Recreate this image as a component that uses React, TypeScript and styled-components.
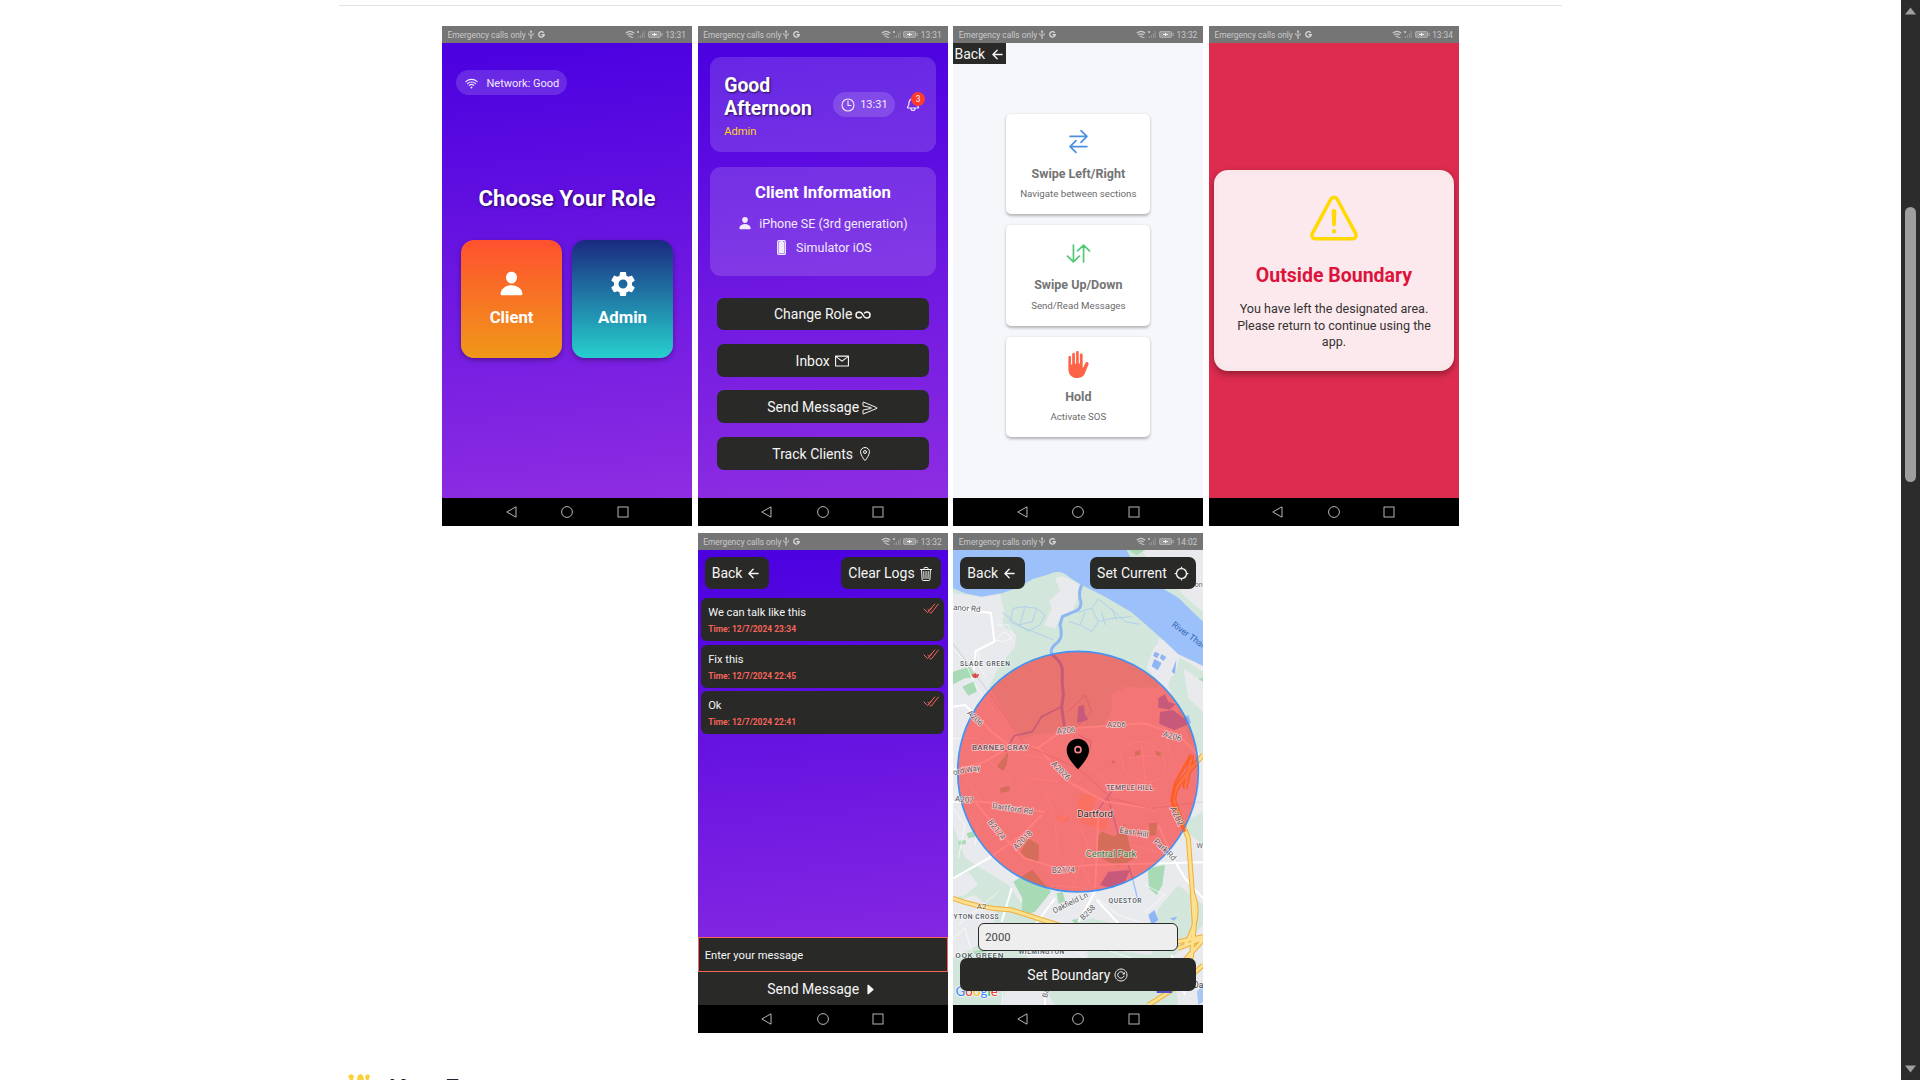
import React from 'react';
import styled, { createGlobalStyle } from 'styled-components';
import {
  IoPerson, IoWifi, IoTimeOutline, IoNotificationsOutline, IoPhonePortrait, IoInfinite,
  IoSendOutline, IoLocationOutline, IoArrowBack, IoSwapHorizontal, IoSwapVertical, IoHandLeft,
  IoTrashOutline, IoCaretForward, IoReloadCircleOutline, IoWarningOutline,
} from 'react-icons/io5';
import { MdSettings, MdGpsNotFixed } from 'react-icons/md';
import { AiOutlineMail } from 'react-icons/ai';

const Global = createGlobalStyle`
  html, body { margin: 0; background: #fff; overflow: hidden; }
  * { box-sizing: border-box; }
  svg { display: block; flex: none; }
`;

const Viewport = styled.div`
  display: flex;
  width: 1920px;
  height: 1080px;
  overflow: hidden;
  font-family: Roboto, "Noto Sans", sans-serif;
`;
const Page = styled.main`
  flex: 1;
  height: 1080px;
  overflow: hidden;
  padding: 5px 339px 0;
`;
const Gallery = styled.section`
  display: flex;
  flex-wrap: wrap;
  justify-content: center;
  gap: 7px 5.67px;
  border-top: 1px solid #dfe2e6;
  padding-top: 20px;
`;
const Heading = styled.h2`
  display: flex;
  gap: 17px;
  margin: 38px 0 0 8px;
  font: 600 28px/36px "Open Sans", "Noto Sans", sans-serif;
  color: #1f2328;
  svg { margin-top: 3px; }
`;

const Scrollbar = styled.div`
  width: 19px;
  height: 1080px;
  background: #2c2c2c;
  display: flex;
  flex-direction: column;
  align-items: center;
  justify-content: space-between;
  padding: 7px 0;
`;
const Track = styled.div`
  flex: 1;
  padding-top: 192px;
`;
const Thumb = styled.div`
  width: 11px;
  height: 275px;
  border-radius: 6px;
  background: #9f9f9f;
`;

const PhoneFrame = styled.article`
  width: 250px;
  height: 500px;
  display: flex;
  flex-direction: column;
  overflow: hidden;
`;
const Status = styled.header`
  height: 17px;
  flex: none;
  background: #757575;
  color: #c9c9c9;
  display: flex;
  align-items: center;
  padding: 0 6px 0 5.5px;
  font-size: 8.4px;
  white-space: nowrap;
`;
const StatusRight = styled.span`
  margin-left: auto;
  display: flex;
  align-items: center;
  gap: 2.5px;
`;
const Screen = styled.div<{ $bg: string }>`
  flex: 1;
  min-height: 0;
  background: ${p => p.$bg};
  display: flex;
  flex-direction: column;
  position: relative;
`;
const NavBar = styled.footer`
  height: 28.5px;
  flex: none;
  background: #000;
  display: flex;
  justify-content: center;
  align-items: center;
  gap: 43.5px;
`;

const purple = 'linear-gradient(175deg, #4a00e0 0%, #8e2de2 100%)';

const Pill = styled.div<{ $gap: number }>`
  display: flex;
  align-items: center;
  gap: ${p => p.$gap}px;
  height: 25px;
  padding: 1px 7.5px 0;
  border-radius: 13px;
  background: rgba(255, 255, 255, 0.15);
  color: #f1eafc;
  font-size: 11px;
  white-space: nowrap;
`;
const ClockPill = styled(Pill)`
  svg path { stroke-width: 36px; }
`;
const RoleTop = styled.div`
  display: flex;
  padding: 27px 14px 0;
`;
const RoleTitle = styled.h1`
  margin: 90px 0 0;
  text-align: center;
  font: 700 22.2px/26px Roboto, sans-serif;
  color: #fff;
  text-shadow: 1px 1px 3px rgba(0, 0, 0, 0.6);
`;
const RoleRow = styled.div`
  display: flex;
  justify-content: center;
  gap: 10.5px;
  margin-top: 29px;
`;
const RoleCard = styled.div<{ $bg: string }>`
  width: 100.5px;
  height: 118px;
  border-radius: 13px;
  background: ${p => p.$bg};
  box-shadow: 0 2px 5px rgba(0, 0, 0, 0.35);
  display: flex;
  flex-direction: column;
  align-items: center;
  padding-top: 29.5px;
  color: #fff;
  font: 700 16.7px/20px Roboto, sans-serif;
`;
const RoleIcon = styled.div`
  height: 28px;
  margin-bottom: 10px;
  display: flex;
  align-items: center;
`;

const Glass = styled.div`
  margin: 0 12px 15px 12.5px;
  border-radius: 11px;
  background: rgba(255, 255, 255, 0.15);
  color: #f1eafc;
`;
const Greeting = styled(Glass)`
  margin-top: 13.5px;
  height: 95.5px;
  display: flex;
  align-items: center;
  padding: 0 17px 0 14px;
`;
const Hello = styled.h2`
  margin: 4.5px 0 0;
  width: 108.5px;
  font: 700 19.4px/22.8px Roboto, sans-serif;
  color: #fff;
  text-shadow: 1px 1px 2px rgba(0, 0, 0, 0.65);
`;
const RoleName = styled.div`
  margin-top: 4.5px;
  font-size: 11.2px;
  line-height: 13px;
  color: #ffd21c;
`;
const Bell = styled.div`
  position: relative;
  margin-left: 10px;
  path { stroke-width: 38px; }
`;
const Badge = styled.span`
  position: absolute;
  right: -4px;
  top: -4.5px;
  width: 14px;
  height: 14px;
  border-radius: 7px;
  background: #ff3b30;
  color: #fff;
  font-size: 8.3px;
  line-height: 15px;
  text-align: center;
`;
const InfoCard = styled(Glass)`
  height: 108.5px;
  padding-top: 16px;
  display: flex;
  flex-direction: column;
  align-items: center;
`;
const InfoTitle = styled.h3`
  margin: 0 0 10px;
  font: 700 16.7px/20px Roboto, sans-serif;
  color: #fff;
`;
const InfoLine = styled.div<{ $gap: number }>`
  display: flex;
  align-items: center;
  gap: ${p => p.$gap}px;
  height: 20px;
  margin-bottom: 4px;
  font-size: 12.5px;
  white-space: nowrap;
`;
const Menu = styled.div`
  display: flex;
  flex-direction: column;
  gap: 13.8px;
  margin: 7px 19px 0;
`;
const DarkButton = styled.button<{ $gap?: number; $right?: number }>`
  display: flex;
  justify-content: center;
  align-items: center;
  gap: ${p => p.$gap ?? 4}px;
  height: 32.7px;
  padding: 2px ${p => p.$right ?? 7}px 0 7px;
  border: 0;
  border-radius: 7px;
  background: #292927;
  color: #f5f5f5;
  font: 400 14px/17px Roboto, sans-serif;
  white-space: nowrap;
`;
const CornerBack = styled(DarkButton)`
  align-self: flex-start;
  width: 53px;
  height: 21px;
  padding: 1.5px 2px 0;
  gap: 5px;
  border-radius: 0;
`;

const Hints = styled.div`
  display: flex;
  flex-direction: column;
  align-items: center;
  gap: 11px;
  margin-top: 49.5px;
`;
const Hint = styled.div`
  width: 144px;
  height: 100.6px;
  border-radius: 5px;
  background: #fff;
  box-shadow: 0 1.5px 3px rgba(0, 0, 0, 0.28);
  display: flex;
  flex-direction: column;
  align-items: center;
  padding-top: 14.5px;
  color: #6b6b6b;
  font-size: 9.7px;
  line-height: 12px;
  strong {
    margin: 10.5px 0 6.5px;
    font-size: 12.5px;
    line-height: 16px;
    color: #747474;
  }
`;

const Alert = styled.div`
  width: 240px;
  height: 201.5px;
  margin: 126.5px 0 0 5px;
  border-radius: 14px;
  background: #fce9ed;
  border: 4px solid #fae7ea;
  box-shadow: 0 3px 7px rgba(0, 0, 0, 0.35);
  display: flex;
  flex-direction: column;
  align-items: center;
  padding-top: 16.5px;
`;
const AlertTitle = styled.h2`
  margin: 17.5px 0 13.5px;
  font: 700 19.5px/24px Roboto, sans-serif;
  color: #dc143c;
`;
const AlertText = styled.p`
  margin: 0;
  width: 204px;
  text-align: center;
  font-size: 12.55px;
  line-height: 16.7px;
  color: #333;
`;

const TopActions = styled.div`
  display: flex;
  justify-content: space-between;
  padding: 6.5px 7px 0;
  position: relative;
`;
const Log = styled.div`
  height: 43.3px;
  margin: 0 3.5px 3.2px;
  border-radius: 6px;
  background: #292927;
  display: flex;
  justify-content: space-between;
  padding: 8px 5px 0 7px;
  color: #f5f5f5;
  font-size: 11.15px;
  line-height: 14px;
  svg { margin-top: -3.5px; }
`;
const LogTime = styled.div`
  margin-top: 4px;
  font-size: 8.45px;
  line-height: 10px;
  font-weight: 700;
  color: #f7645b;
`;
const Logs = styled.div`
  margin-top: 9px;
  flex: 1;
`;
const MessageInput = styled.div`
  height: 35px;
  border: 1px solid #f7645b;
  background: #292927;
  color: #f5f5f5;
  font-size: 11.2px;
  line-height: 35px;
  padding-left: 6px;
`;
const SendBar = styled(DarkButton)`
  border-radius: 0;
`;

const MapCanvas = styled.svg`
  position: absolute;
  inset: 0;
  width: 250px;
  height: 455px;
`;
const MapBottom = styled.div`
  margin-top: auto;
  position: relative;
  display: flex;
  flex-direction: column;
  gap: 7px;
  padding: 0 7px 14px;
`;
const Radius = styled.div`
  margin: 0 18px;
  height: 27.5px;
  border: 1.5px solid #292927;
  border-radius: 6px;
  background: #eee;
  color: #444;
  font-size: 11.2px;
  line-height: 27px;
  padding-left: 6px;
`;

const StatusBar = ({ time }: { time: string }) => (
  <Status>
    <span>Emergency calls only</span>
    <svg width="6" height="9" viewBox="0 0 12 18" fill="none" stroke="#c9c9c9" strokeWidth="1.8" style={{ marginLeft: 2 }}>
      <path d="M6 2v13M1.500 6v3.500L6 12l4.500-2.500V6M4.300 4L6 1l1.700 3z" /><circle cx="6" cy="16" r="1" />
    </svg>
    <svg width="7" height="7" viewBox="0 0 14 14" fill="none" stroke="#dadada" strokeWidth="2.6" style={{ marginLeft: 4 }}>
      <path d="M11.500 3.500A5.500 5.500 0 1 0 12.500 7.500H7" />
    </svg>
    <StatusRight>
      <svg width="20" height="9" viewBox="0 0 20 9" fill="none" stroke="#c9c9c9" strokeWidth="1.200">
        <path d="M.8 3.200Q5 -.6 9.200 3.200M2.300 5Q5 2.600 7.700 5M3.600 6.600Q5 5.400 6.400 6.600" /><path d="M5.500 7.500h3M12 1l2 2M14 1l-2 2" strokeWidth=".8" />
        <path d="M13.500 8V6M15.500 8V5M17.500 8V3M19.200 8V1" stroke="#9a9a9a" strokeWidth=".9" />
      </svg>
      <svg width="15" height="7" viewBox="0 0 15 7"><rect x=".5" y=".5" width="12" height="6" rx="1" fill="#999" stroke="#b5b5b5" strokeWidth=".8" /><path d="M4 3.500h5M6.500 2v3" stroke="#eee" strokeWidth="1.200" /><path d="M14 2v3" stroke="#bbb" /></svg>
      <span>{time}</span>
    </StatusRight>
  </Status>
);

const Phone = ({ time, bg, children }: { time: string; bg: string; children: React.ReactNode }) => (
  <PhoneFrame>
    <StatusBar time={time} />
    <Screen $bg={bg}>{children}</Screen>
    <NavBar>
      <svg width="12" height="12" viewBox="0 0 12 12" fill="none" stroke="#b5b5b5"><path d="M10 .8v10.400L.8 6z" /></svg>
      <svg width="12" height="12" viewBox="0 0 12 12" fill="none" stroke="#b5b5b5"><circle cx="6" cy="6" r="5.400" /></svg>
      <svg width="12" height="12" viewBox="0 0 12 12" fill="none" stroke="#b5b5b5"><rect x="1" y="1" width="10" height="10" /></svg>
    </NavBar>
  </PhoneFrame>
);

const DoneMark = () => (
  <svg width="16" height="11" viewBox="0 0 48 33" fill="none" stroke="#f7645b" strokeWidth="3">
    <path d="M2 17L14 29L36 2M14 18L19 23M20 27L24 31L47 2M19 23L26 14" />
  </svg>
);

const logs = [
  ['We can talk like this', '12/7/2024 23:34'],
  ['Fix this', '12/7/2024 22:45'],
  ['Ok', '12/7/2024 22:41'],
];

type Label = {
  t: string; x: number; y: number; s?: number; r?: number; c?: string; w?: number; ls?: number; plain?: boolean;
};
const area = '#505860';
const labels: Label[] = [
  { t: 'Manor Rd', x: 55, y: 257, r: 5 },
  { t: 'SLADE GREEN', x: 121, y: 424, s: 20, c: area, w: 500, ls: 2.2 },
  { t: 'River Than', x: 733, y: 340, s: 26, r: 36, c: '#2f66b5', plain: true },
  { t: 'A206', x: 90, y: 587, r: 44 },
  { t: 'A206', x: 363, y: 624, r: -6 },
  { t: 'A206', x: 514, y: 605 },
  { t: 'A206', x: 682, y: 641, r: 16 },
  { t: 'A2026', x: 348, y: 745, r: 46 },
  { t: 'BARNES CRAY', x: 166, y: 674, c: '#5f5560', w: 500, ls: 1.2 },
  { t: 'ord Way', x: 65, y: 743, s: 23, r: -10 },
  { t: 'TEMPLE HILL', x: 554, y: 796, s: 21, c: '#6d5a64', w: 500, ls: 1.3 },
  { t: 'A207', x: 58, y: 832, r: 6 },
  { t: 'Dartford Rd', x: 203, y: 859, r: 9 },
  { t: 'Dartford', x: 450, y: 875, s: 29, c: '#2b2427' },
  { t: 'A282', x: 696, y: 882, s: 26, r: 64 },
  { t: 'B2174', x: 155, y: 922, r: 52 },
  { t: 'A2018', x: 233, y: 953, r: -44 },
  { t: 'East Hill', x: 567, y: 930, r: 10 },
  { t: 'Park Rd', x: 660, y: 982, r: 44 },
  { t: 'Central Park', x: 498, y: 996, s: 28, c: '#2f7d4a' },
  { t: 'B2174', x: 355, y: 1043, r: -2 },
  { t: 'Oakfield Ln', x: 376, y: 1141, s: 23, r: -26 },
  { t: 'B258', x: 428, y: 1170, s: 23, r: -46 },
  { t: 'QUESTOR', x: 541, y: 1134, s: 20, c: area, w: 500, ls: 1.8 },
  { t: 'A2', x: 110, y: 1153, c: '#6b5a30' },
  { t: 'YTON CROSS', x: 94, y: 1183, s: 20, c: area, w: 500, ls: 1.6 },
  { t: 'WILMINGTON', x: 290, y: 1286, s: 20, c: area, w: 500, ls: 1.4 },
  { t: 'OOK GREEN', x: 104, y: 1298, c: area, w: 500, ls: 1.8 },
  { t: 'W', x: 764, y: 968, s: 22 },
  { t: 'on', x: 761, y: 187, s: 21 },
  { t: 'Da', x: 760, y: 1388, s: 25, c: '#333' },
  { t: 'Ba', x: 302, y: 1412, s: 22, r: -76 },
];

const motorways = 'M774 690L735 735L700 780Q680 810 690 840L730 940L742 1100L748 1200L740 1290L735 1310M720 790L740 690M24 1120Q100 1150 200 1155L340 1200L480 1245L700 1250L774 1235M700 1270L774 1240M745 1110Q770 1180 720 1260M715 1310L774 1245M610 1440L720 1370L774 1320';

const MapView = () => (
  <MapCanvas viewBox="24 75 750 1365" preserveAspectRatio="none">
    <rect x="24" y="75" width="750" height="1365" fill="#d2e6dc" />
    <g fill="#e8eaed">
      <path d="M24 205L110 215L165 206L178 262L172 300L214 330L208 368L160 430L132 485L210 590L225 640L330 620L480 600L490 500L540 485L600 490L640 340L700 380L774 425V860L700 900L774 960V1140L700 1080L640 1150L600 1290L560 1210L440 1180L330 1210L240 1150L190 1080L60 1000L24 900z" />
      <path d="M590 75H774V262L720 215L690 180L640 160z" />
      <path d="M330 160Q350 145 390 172L410 185L385 255L345 280L330 312L298 300L320 250L312 230L346 195z" />
      <path d="M24 1130L90 1110L160 1170L140 1200L100 1260L24 1300zM24 1060L70 1040L100 1080L60 1110L24 1120zM240 1230H420L430 1310H250zM560 1200L640 1220L620 1290L540 1280zM680 1300L774 1200V1440H700zM180 1400L260 1330L330 1440H170z" />
    </g>
    <path d="M160 430L132 485L215 620L390 600L480 596L540 480L640 490L640 340L320 385z" fill="#d2e6dc" />
    <path d="M700 395L774 440V700L735 640L700 560L670 480z" fill="#d2e6dc" />
    <path d="M715 430L774 470V560L730 520z" fill="#e8eaed" />
    <path d="M625 370L650 342L708 384L690 450L640 470L605 430zM500 505L560 485L612 492L620 600L500 590z" fill="#e8eaed" />
    <path d="M24 75H545Q560 110 600 148L640 182L700 218L774 290V422L700 388L655 345L560 262L480 215L410 180L375 158Q345 128 312 148L262 163L215 190L170 205L110 215L60 205L24 190z" fill="#9cc0f9" />
    <path d="M550 75H600L575 90z" fill="#a8dab5" />
    <path d="M410 180Q398 205 408 232Q410 255 380 263L352 275L345 300Q355 335 340 350Q312 370 320 388Q350 410 352 435Q350 470 355 510L350 545L358 605" fill="none" stroke="#8db7f3" strokeWidth="9" />
    <path d="M350 545L290 575L262 620L208 632L180 680" fill="none" stroke="#8db7f3" strokeWidth="5" />
    <g fill="none" stroke="#abcbec" strokeWidth="2.500">
      <path d="M205 250L240 245L275 250L300 270L285 300L250 318L220 300L172 262M205 250L195 290L240 310L325 345M275 250L262 290L220 300M240 245L225 300" />
      <path d="M400 262L440 250L460 222L520 270L540 290L585 298M440 250L460 290L440 320L405 300L372 290M460 290L500 280L560 275M405 300L420 262M470 260L480 300M500 250L515 285" />
      <path d="M370 560L420 510L440 560L400 600M400 630L440 650L430 690" stroke="#a9bdd8" />
    </g>
    <g fill="#8fb5f5">
      <path d="M630 380l14 6-8 14-12-8zM650 388l14 8-8 12-12-8zM628 402l22 12-12 22-18-12zM694 405L680 440L690 448z" />
      <path d="M640 520l20-12 10 22 22 8-18 16-34-6zM645 560l40-5 30 25 15-10 8 24-50 22-45-20z" />
      <path d="M400 545l16-6 4 30 10 15-34 10z" />
      <path d="M490 1040L555 1035L540 1070L500 1090L465 1080zM610 1170l18-15 12 30-20 15zM675 1180l22-5-10 12z" />
      <path d="M756 1400l18-20v50l-14 10zM650 1310l14-6 4 24z" opacity=".7" />
    </g>
    <path d="M490 820L520 930L560 1050L580 1130M440 880L500 800" fill="none" stroke="#9cc0f9" strokeWidth="4" />
    <g fill="#a8dab5">
      <path d="M24 440L72 425L95 455L60 460L24 478zM52 485L88 468L95 500L70 512zM760 462L774 458V470z" />
      <path d="M155 725L190 680L185 720L175 738zM570 680l16-5v14l-16 3zM632 678l18 2-2 14-16-2zM500 706l10 2v8l-10-1z" />
      <path d="M165 788l30-5-2 15-25 6zM225 985L250 940L282 960L280 1010L240 1000zM455 940L470 920L510 935L540 895L555 970L568 1000L520 1025L450 990z" />
      <path d="M612 895L636 893L634 930L614 932zM205 1070L262 1034L318 1100L270 1160L230 1172L232 1120zM608 1030L660 1020L652 1080L635 1110L612 1090zM65 925l25-8v18l-20 5zM40 948l22-3v12l-20 3zM380 1185l30-6-18 20zM335 1105l18-4 8 28-20 8zM85 1280l30-8 10 16-30 5z" />
    </g>
    <path d="M405 805L455 815L440 850L490 890L480 915L420 900L390 870zM335 870l40 5-10 18-30-6z" fill="#f2e2c4" />
    <g fill="none" stroke="#fff" strokeWidth="3" opacity=".7">
      <path d="M24 370L60 410L90 480L150 560M150 345L180 320L200 340L175 350zM155 300L190 300L205 330M100 380V420L120 455M24 640H100L160 690M120 700L200 760L150 800M180 640L240 690L300 700M220 720L260 760L340 770M60 760L110 830L180 830" />
      <path d="M525 690Q560 630 620 660Q680 700 650 760Q600 790 540 740zM545 700L640 690M590 650L600 770M660 620L680 700L720 740M620 860L700 820M400 700L500 780L640 790M380 860L330 900L340 1000M400 900L430 960L380 1090M410 1020L450 1110M560 960L700 1000M300 800L330 880M24 850L60 900L40 1000M60 850L100 910L90 960" />
      <path d="M40 1200L90 1160L160 1100M24 1240L60 1210L80 1280M320 1080L420 1090L520 1170L610 1200M420 1200L380 1260L420 1300M600 1080L660 1110L600 1160M470 1270L560 1300M180 1320L170 1440M100 1400L200 1350" />
    </g>
    <g fill="none" stroke="#fff" strokeWidth="6">
      <path d="M24 245L90 258L138 264L148 350L92 378L86 440M24 545L60 540L140 620L190 660L280 668L340 625L400 608L600 595L700 630L760 690M280 668L370 770L480 830L620 850M24 735L120 710L190 668M24 830L110 830L300 862M90 830L170 930L240 1000L340 1030L440 1020L774 1012M24 1060L130 1000L230 930L290 870M460 870L450 1100L400 1190M455 1125L580 1260M640 900L690 1010L720 1060L774 1120M330 1120L270 1200M170 1190L200 1090M300 1340V1440M680 1290L720 1410" />
    </g>
    <path d="M24 355L130 500L240 660L400 730L500 820L620 850L774 830" fill="none" stroke="#cfd2d6" strokeWidth="4" opacity=".7" />
    <g fill="none" strokeLinejoin="round">
      <path d={motorways} stroke="#efae38" strokeWidth="15" />
      <path d={motorways} stroke="#fbe08f" strokeWidth="9" />
    </g>
    <path d="M635 1390h46v14h-46z" fill="#5552c4" />
    <path d="M81 450h21M84 455h15M91 445v14" stroke="#e2403f" strokeWidth="4.500" />
    <circle cx="399" cy="740" r="361" fill="rgba(255,0,0,.5)" stroke="#3f93f5" strokeWidth="5" />
    <path d="M738 690L690 775L680 830L700 870L720 920" fill="none" stroke="#ff5a1f" strokeWidth="9" opacity=".8" />
    <g fontFamily="Roboto, sans-serif" textAnchor="middle" paintOrder="stroke" strokeLinejoin="round">
      {labels.map(({ t, x, y, s = 24, r = 0, c = '#5b5b60', w = 400, ls = 0, plain }, i) => (
        <text key={i} x={x} y={y} fontSize={s} fontWeight={w} letterSpacing={ls} fill={c}
          stroke={plain ? 'none' : 'rgba(255,255,255,.6)'} strokeWidth="5" transform={`rotate(${r} ${x} ${y - s / 3})`}>{t}</text>
      ))}
      <text x="95" y="1413" fontSize="40" fontWeight="500" stroke="#fff" strokeWidth="4" fontFamily="Lato, sans-serif">
        <tspan fill="#4285f4">G</tspan><tspan fill="#ea4335">o</tspan><tspan fill="#fbbc05">o</tspan><tspan fill="#4285f4">g</tspan><tspan fill="#34a853">l</tspan><tspan fill="#ea4335">e</tspan>
      </text>
    </g>
    <path d="M399 641C379 641 365 656 365 675C365 698 386 718 399 733C412 718 432 698 432 675C432 656 418 641 399 641z" fill="#000" />
    <circle cx="399" cy="674" r="9" fill="none" stroke="#f58a86" strokeWidth="5" />
  </MapCanvas>
);

export default function App() {
  return (
    <Viewport>
      <Global />
      <Page>
        <Gallery>
          <Phone time="13:31" bg={purple}>
            <RoleTop><Pill $gap={8}><IoWifi size={15} />Network: Good</Pill></RoleTop>
            <RoleTitle>Choose Your Role</RoleTitle>
            <RoleRow>
              <RoleCard $bg="linear-gradient(#ff512f, #f09819)"><RoleIcon><IoPerson size={27} /></RoleIcon>Client</RoleCard>
              <RoleCard $bg="linear-gradient(#1a2980, #26d0ce)"><RoleIcon><MdSettings size={30} /></RoleIcon>Admin</RoleCard>
            </RoleRow>
          </Phone>

          <Phone time="13:31" bg={purple}>
            <Greeting>
              <div><Hello>Good Afternoon</Hello><RoleName>Admin</RoleName></div>
              <ClockPill $gap={4}><IoTimeOutline size={16} />13:31</ClockPill>
              <Bell><IoNotificationsOutline size={16} /><Badge>3</Badge></Bell>
            </Greeting>
            <InfoCard>
              <InfoTitle>Client Information</InfoTitle>
              <InfoLine $gap={7}><IoPerson size={14} />iPhone SE (3rd generation)</InfoLine>
              <InfoLine $gap={7}><IoPhonePortrait size={15} />Simulator iOS</InfoLine>
            </InfoCard>
            <Menu>
              <DarkButton $gap={3}>Change Role <IoInfinite size={16} /></DarkButton>
              <DarkButton>Inbox <AiOutlineMail size={16} /></DarkButton>
              <DarkButton $gap={3}>Send Message <IoSendOutline size={16} /></DarkButton>
              <DarkButton>Track Clients <IoLocationOutline size={16} /></DarkButton>
            </Menu>
          </Phone>

          <Phone time="13:32" bg="#f5f7fb">
            <CornerBack>Back <IoArrowBack size={15} /></CornerBack>
            <Hints>
              <Hint><IoSwapHorizontal size={27} color="#4a90e2" /><strong>Swipe Left/Right</strong>Navigate between sections</Hint>
              <Hint><IoSwapVertical size={27} color="#50c878" /><strong>Swipe Up/Down</strong>Send/Read Messages</Hint>
              <Hint><IoHandLeft size={27} color="#ff6347" /><strong>Hold</strong>Activate SOS</Hint>
            </Hints>
          </Phone>

          <Phone time="13:34" bg="#dd2c4e">
            <Alert>
              <IoWarningOutline size={56} color="#ffd900" />
              <AlertTitle>Outside Boundary</AlertTitle>
              <AlertText>You have left the designated area. Please return to continue using the app.</AlertText>
            </Alert>
          </Phone>

          <Phone time="13:32" bg={purple}>
            <TopActions>
              <DarkButton $right={8}>Back <IoArrowBack size={15} /></DarkButton>
              <DarkButton $gap={3}>Clear Logs <IoTrashOutline size={16} /></DarkButton>
            </TopActions>
            <Logs>
              {logs.map(([text, time]) => (
                <Log key={time}><div>{text}<LogTime>Time: {time}</LogTime></div><DoneMark /></Log>
              ))}
            </Logs>
            <MessageInput>Enter your message</MessageInput>
            <SendBar>Send Message <IoCaretForward size={15} /></SendBar>
          </Phone>

          <Phone time="14:02" bg="#d2e6dc">
            <MapView />
            <TopActions>
              <DarkButton $right={8}>Back <IoArrowBack size={15} /></DarkButton>
              <DarkButton $gap={7.5}>Set Current <MdGpsNotFixed size={15} /></DarkButton>
            </TopActions>
            <MapBottom>
              <Radius>2000</Radius>
              <DarkButton $gap={3}>Set Boundary <IoReloadCircleOutline size={16} /></DarkButton>
            </MapBottom>
          </Phone>
        </Gallery>
        <Heading>
          <svg width="24" height="24" viewBox="0 0 24 24" fill="#fcd03a">
            <path d="M1 2l3-2 3 2-1 4 4 2q0-8 3.500-8T17 8l2-2-1-4 3-2 2 2-3 8 4 4-8 8H8l-6-8 3-4z" />
          </svg>
          Key Features
        </Heading>
      </Page>
      <Scrollbar>
        <svg width="11" height="8" viewBox="0 0 11 8" fill="#9f9f9f"><path d="M5.500 .5L11 7.500H0z" /></svg>
        <Track><Thumb /></Track>
        <svg width="11" height="8" viewBox="0 0 11 8" fill="#9f9f9f"><path d="M5.500 7.500L0 .5h11z" /></svg>
      </Scrollbar>
    </Viewport>
  );
}
